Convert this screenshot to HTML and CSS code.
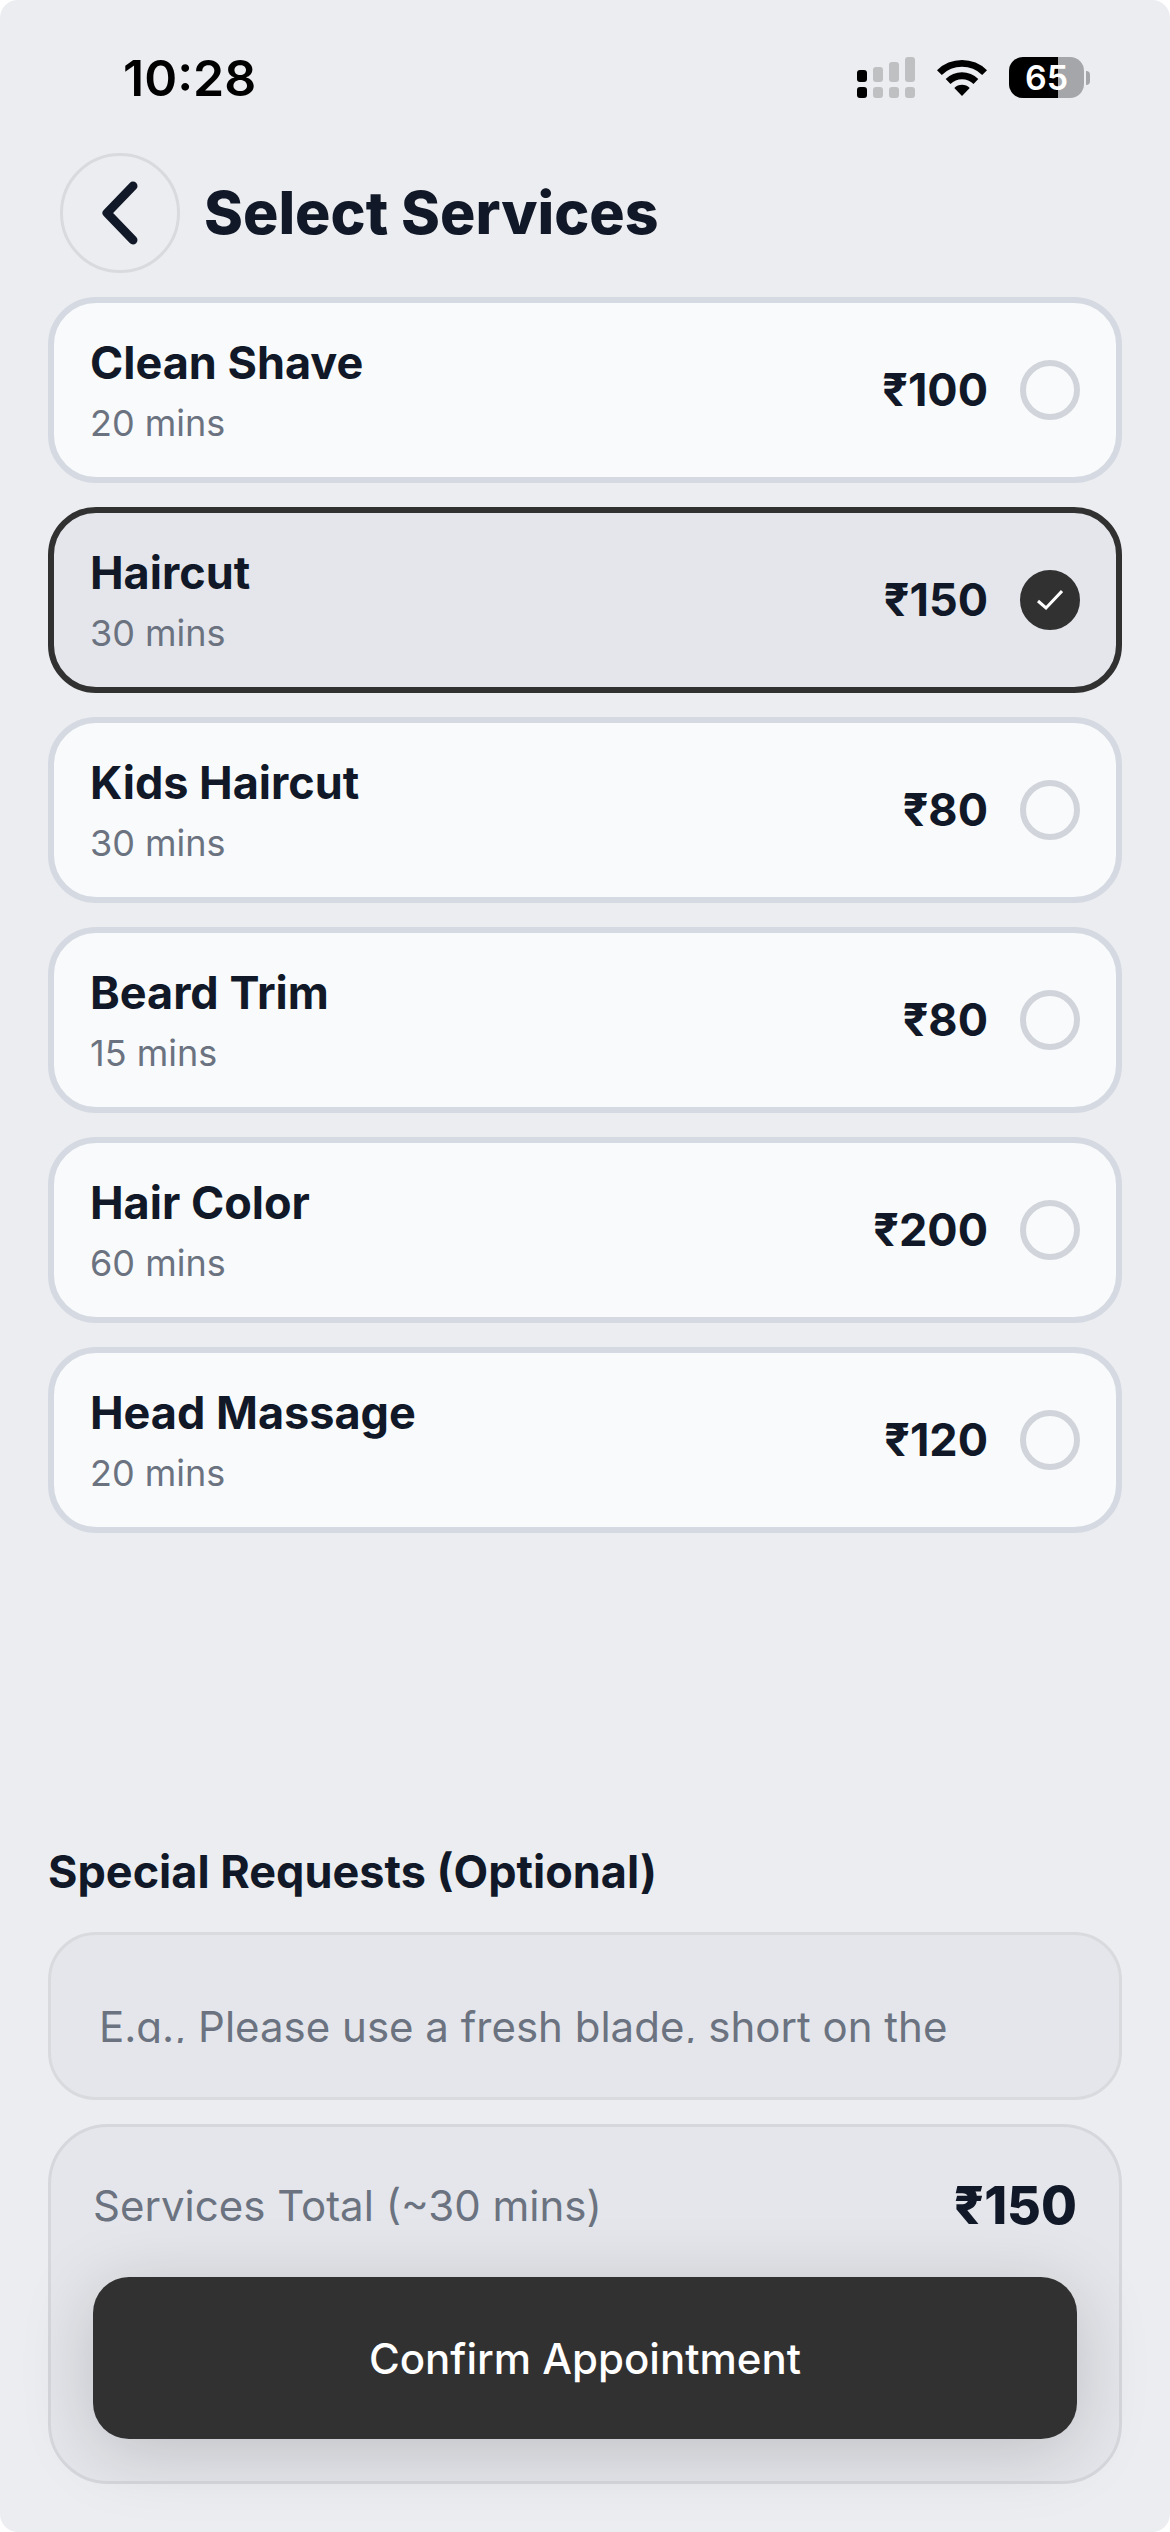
FILE: index.html
```html
<!doctype html>
<html lang="en">
  <head>
    <meta charset="utf-8">
    <meta name="viewport" content="width=device-width, initial-scale=1">
    <title>Select Services</title>
    <link rel="stylesheet" href="styles.css">
  </head>
  <body>
    <div class="screen">
      <div class="status-bar">
        <span class="time">10:28</span>
        <div class="status-icons">
          <svg class="signal" viewBox="0 0 58 41" width="58" height="41">
            <g fill="#000">
              <rect x="0" y="13" width="10" height="12" rx="3"/>
              <rect x="0" y="30" width="10" height="11" rx="3"/>
            </g>
            <g fill="#bfc0c2">
              <rect x="16" y="10" width="10" height="15" rx="3"/>
              <rect x="32" y="5" width="10" height="20" rx="3"/>
              <rect x="48" y="0" width="10" height="25" rx="3"/>
              <rect x="16" y="30" width="10" height="11" rx="3"/>
              <rect x="32" y="30" width="10" height="11" rx="3"/>
              <rect x="48" y="30" width="10" height="11" rx="3"/>
            </g>
          </svg>
          <svg class="wifi" viewBox="0 0 50 37" width="50" height="37">
            <path d="M0 11.2a35.5 35.5 0 0 1 50 0L45.2 16a28.6 28.6 0 0 0-40.4 0Z"/>
            <path d="M8.700 20a23.200 23.200 0 0 1 32.600 0l-4.800 4.900a16.400 16.400 0 0 0-23 0Z"/>
            <path d="M17.300 29a11 11 0 0 1 15.400 0L25 37Z"/>
          </svg>
          <div class="battery">
            <span class="battery-level">65</span>
            <span class="battery-cap"></span>
          </div>
        </div>
      </div>

      <header class="header">
        <button class="back" type="button" aria-label="Back">
          <svg viewBox="0 0 36 64" width="36" height="64"><path d="M31 5 5 32l26 27"/></svg>
        </button>
        <h1>Select Services</h1>
      </header>

      <main class="services">
        <label class="service">
          <span class="info"><span class="name">Clean Shave</span><span class="duration">20 mins</span></span>
          <span class="price">₹100</span>
          <span class="check"><input type="checkbox" name="services" value="clean-shave"></span>
        </label>
        <label class="service selected">
          <span class="info"><span class="name">Haircut</span><span class="duration">30 mins</span></span>
          <span class="price">₹150</span>
          <span class="check">
            <input type="checkbox" name="services" value="haircut" checked>
            <svg viewBox="0 0 26 22" width="26" height="22"><path d="m1 12 8 7L25 2"/></svg>
          </span>
        </label>
        <label class="service">
          <span class="info"><span class="name">Kids Haircut</span><span class="duration">30 mins</span></span>
          <span class="price">₹80</span>
          <span class="check"><input type="checkbox" name="services" value="kids-haircut"></span>
        </label>
        <label class="service">
          <span class="info"><span class="name">Beard Trim</span><span class="duration">15 mins</span></span>
          <span class="price">₹80</span>
          <span class="check"><input type="checkbox" name="services" value="beard-trim"></span>
        </label>
        <label class="service">
          <span class="info"><span class="name">Hair Color</span><span class="duration">60 mins</span></span>
          <span class="price">₹200</span>
          <span class="check"><input type="checkbox" name="services" value="hair-color"></span>
        </label>
        <label class="service">
          <span class="info"><span class="name">Head Massage</span><span class="duration">20 mins</span></span>
          <span class="price">₹120</span>
          <span class="check"><input type="checkbox" name="services" value="head-massage"></span>
        </label>
      </main>

      <footer class="footer">
        <label class="requests-label" for="requests">Special Requests (Optional)</label>
        <div class="requests">
          <textarea id="requests" rows="1" placeholder="E.g., Please use a fresh blade, short on the"></textarea>
        </div>
        <div class="summary">
          <div class="total">
            <span class="total-label">Services Total (~30 mins)</span>
            <span class="total-price">₹150</span>
          </div>
          <button class="confirm" type="button">Confirm Appointment</button>
        </div>
      </footer>
    </div>
  </body>
</html>
```
FILE: styles.css
```css
* {
  box-sizing: border-box;
}
html {
  background: #fff;
}
body {
  margin: 0;
  font-family: Inter, "Liberation Sans", sans-serif;
  color: #111827;
}
button,
textarea {
  font-family: inherit;
}
svg {
  display: block;
}
.screen {
  display: flex;
  flex-direction: column;
  min-height: 100vh;
  padding: 0 48px 48px;
  background: #ecedf1;
  border-radius: 18px;
}

/* status bar */
.status-bar {
  display: flex;
  align-items: center;
  justify-content: space-between;
  height: 153px;
  padding: 2px 32px 0 75px;
  color: #000;
}
.time {
  font-size: 50px;
  font-weight: 600;
  line-height: 60px;
}
.status-icons {
  display: flex;
  align-items: center;
  gap: 22px;
}
.battery {
  display: flex;
  align-items: center;
  gap: 2px;
}
.battery-level {
  width: 75px;
  border-radius: 14px;
  background: linear-gradient(to right, #000 65%, #a5a6aa 65%);
  color: #fff;
  font-size: 34px;
  font-weight: 600;
  line-height: 41px;
  text-align: center;
}
.battery-cap {
  width: 4px;
  height: 14px;
  border-radius: 0 8px 8px 0;
  background: #a5a6aa;
}

/* header */
.header {
  display: flex;
  align-items: center;
  gap: 24px;
  padding: 0 12px 24px;
}
.back {
  display: flex;
  align-items: center;
  justify-content: center;
  width: 120px;
  height: 120px;
  padding: 0;
  border: 3px solid #d8dade;
  border-radius: 50%;
  background: none;
}
.back path {
  fill: none;
  stroke: #111827;
  stroke-width: 9;
  stroke-linecap: round;
  stroke-linejoin: round;
}
h1 {
  margin: 0;
  font-size: 59px;
  font-weight: 800;
  line-height: 72px;
}

/* service list */
.services {
  display: flex;
  flex: 1;
  flex-direction: column;
  gap: 24px;
}
.service {
  display: flex;
  align-items: center;
  gap: 32px;
  padding: 30px 36px;
  border: 6px solid #d5d9e2;
  border-radius: 48px;
  background: #f8fafb;
}
.service.selected {
  border-color: #313131;
  background: #e4e6eb;
}
.info {
  display: flex;
  flex: 1;
  flex-direction: column;
  gap: 6px;
}
.name {
  font-size: 45px;
  font-weight: 700;
  line-height: 60px;
}
.duration {
  color: #6b7280;
  font-size: 36px;
  line-height: 48px;
}
.price {
  font-size: 45px;
  font-weight: 700;
  line-height: 60px;
}
.check {
  display: grid;
  place-items: center;
}
.check > * {
  grid-area: 1 / 1;
}
.check input {
  appearance: none;
  width: 60px;
  height: 60px;
  margin: 0;
  border: 6px solid #d1d5db;
  border-radius: 50%;
}
.check input:checked {
  border-color: #313131;
  background: #313131;
}
.check svg {
  pointer-events: none;
}
.check path {
  fill: none;
  stroke: #fff;
  stroke-width: 3;
}

/* requests and total */
.footer {
  display: flex;
  flex-direction: column;
  gap: 24px;
}
.requests-label {
  padding-bottom: 6px;
  font-size: 45px;
  font-weight: 700;
  line-height: 60px;
}
.requests {
  padding: 54px 48px;
  border: 3px solid #d8dade;
  border-radius: 48px;
  background: #e4e6eb;
}
.requests textarea {
  display: block;
  width: 100%;
  height: 54px;
  padding: 0;
  border: 0;
  outline: 0;
  background: none;
  color: #111827;
  font-size: 42px;
  line-height: 76px;
  overflow: hidden;
  resize: none;
}
.requests textarea::placeholder {
  color: #6b7280;
}
.summary {
  padding: 42px;
  border: 3px solid #d5d7dd;
  border-radius: 60px;
  background: #e4e6eb;
}
.total {
  display: flex;
  align-items: center;
  justify-content: space-between;
  height: 72px;
  margin-bottom: 36px;
}
.total-label {
  color: #6b7280;
  font-size: 42px;
}
.total-price {
  font-size: 52px;
  font-weight: 800;
}
.confirm {
  display: block;
  width: 100%;
  height: 162px;
  border: 0;
  border-radius: 36px;
  background: #313131;
  box-shadow: 0 12px 72px rgba(0, 0, 0, 0.17);
  color: #fff;
  font-size: 42px;
  font-weight: 500;
}
```
